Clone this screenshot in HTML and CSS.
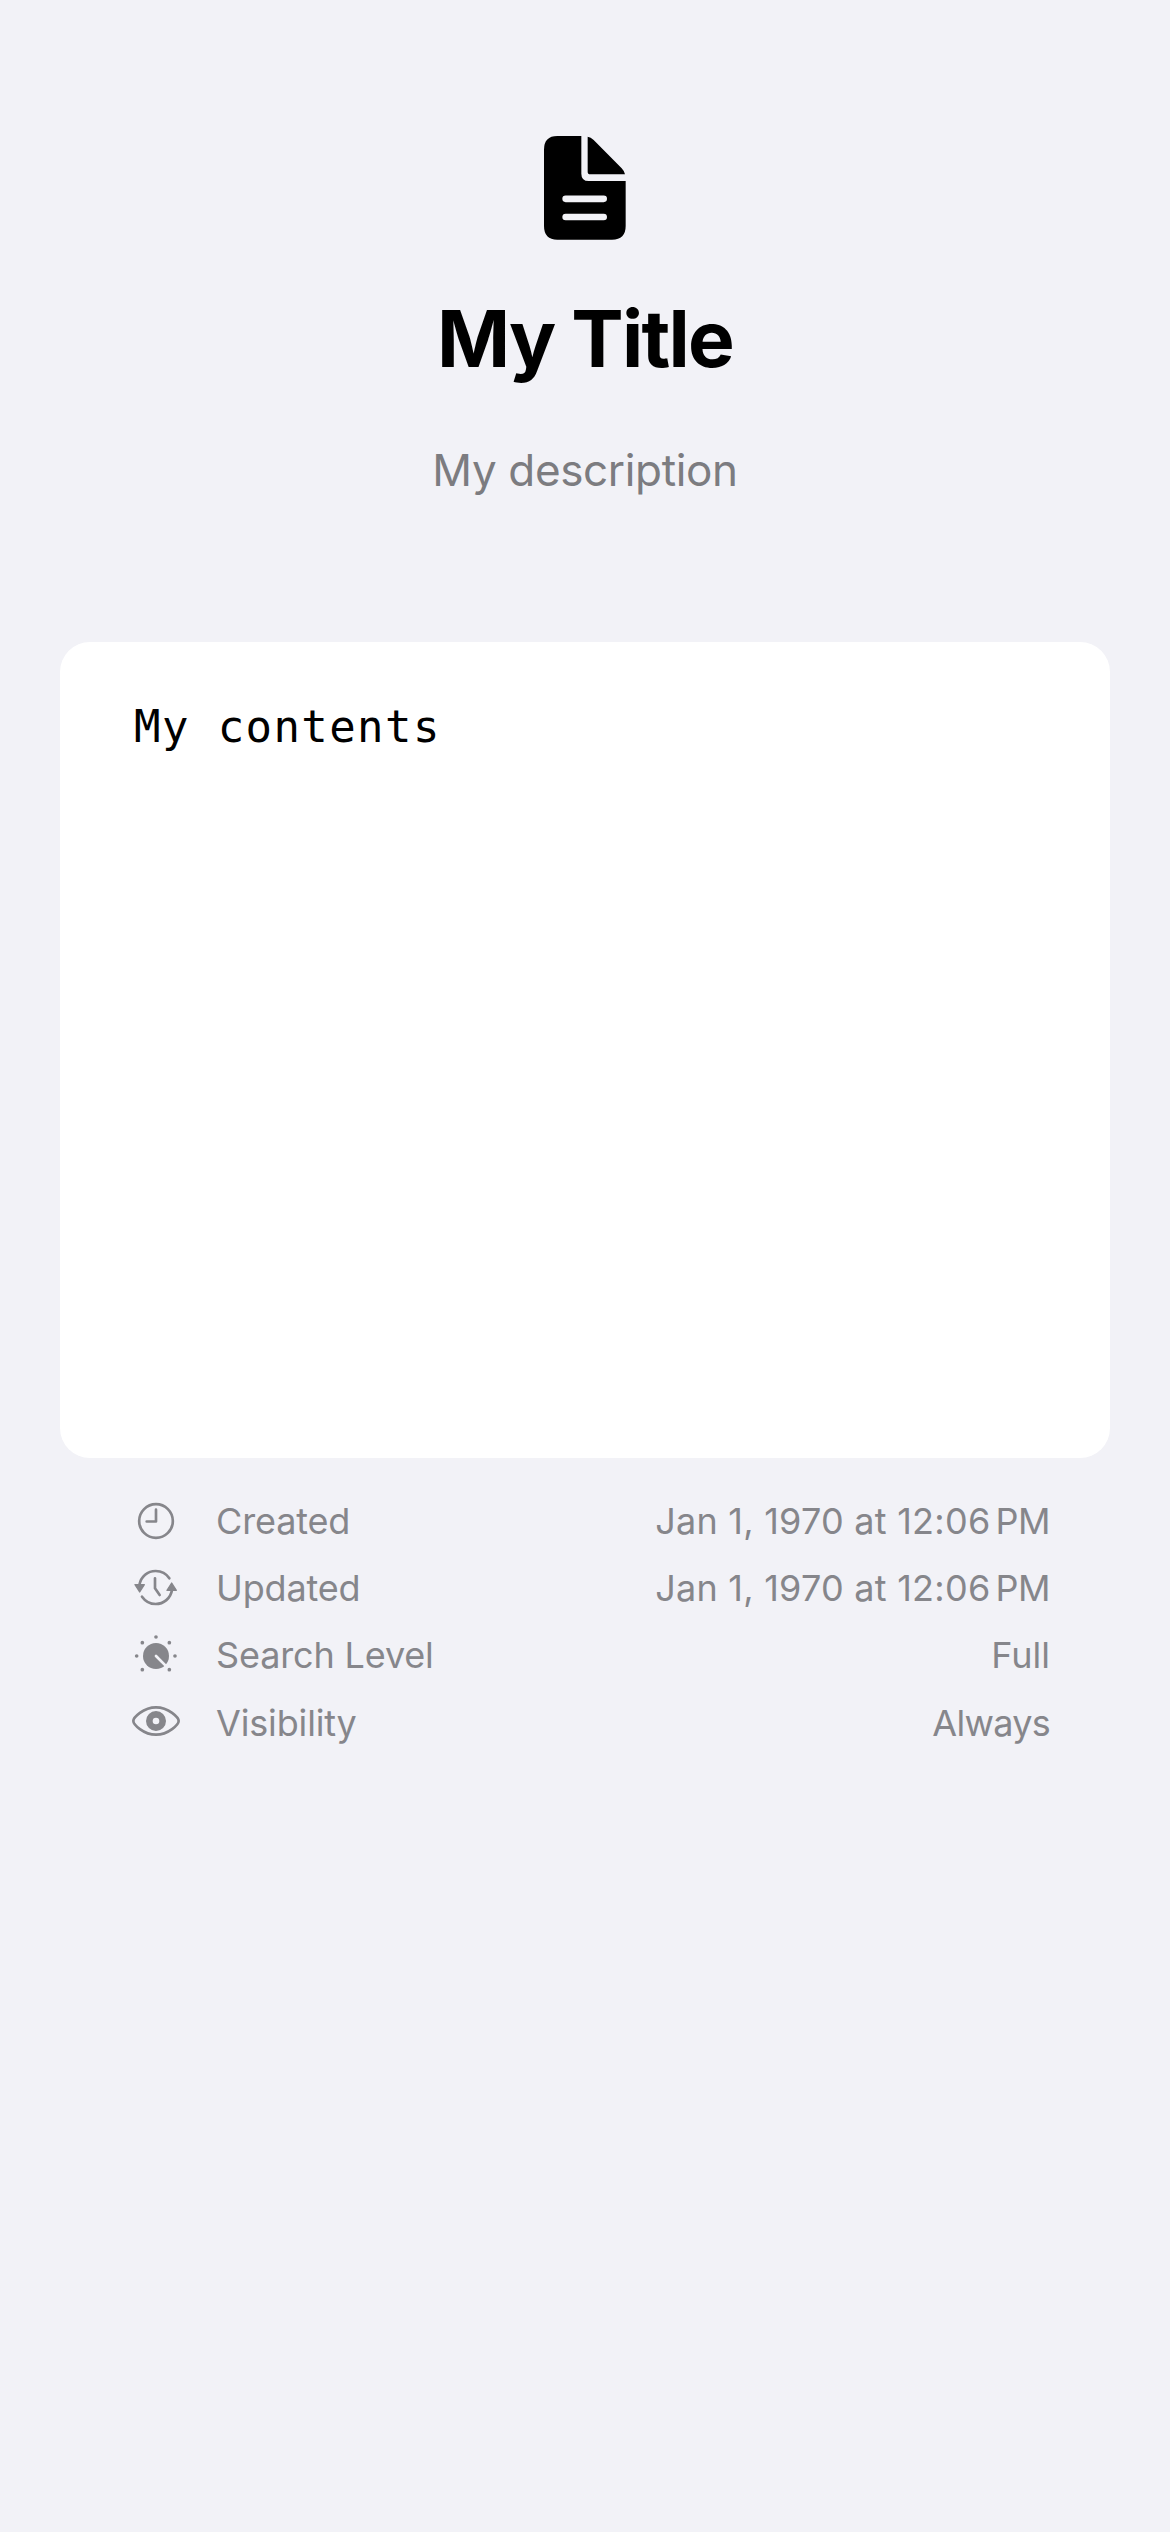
FILE: index.html
```html
<!DOCTYPE html>
<html lang="en">
<head>
<meta charset="utf-8">
<title>My Title</title>
<link rel="stylesheet" href="styles.css">
</head>
<body>
<main class="page">
  <header class="header">
    <svg class="doc-icon" viewBox="372 47 246 312" aria-hidden="true">
      <path d="M412 47H484V160Q484 182 506 182H617V317Q617 358 576 358H412Q372 358 372 317V88Q372 47 412 47Z"/>
      <path d="M503 49Q512 50 521 59L605 144Q613 152 615 162H511Q503 162 503 154Z"/>
      <path class="doc-lines" d="M437 235.500H551M437 290H551"/>
    </svg>
    <h1 class="title">My Title</h1>
    <p class="description">My description</p>
  </header>
  <section class="card"><p class="contents">My contents</p></section>
  <ul class="details">
    <li class="row">
      <svg class="icon" viewBox="18 3 180 180" aria-hidden="true"><circle cx="108" cy="93" r="50.500"/><path d="M108 59V94.500H80"/></svg>
      <span class="label">Created</span>
      <span class="value date"><span class="day">Jan 1, 1970 at 12:06</span><span class="period">PM</span></span>
    </li>
    <li class="row">
      <svg class="icon" viewBox="18 205 180 180" aria-hidden="true"><path d="M58 286C63 260 83 244 107 244C124 244 139 252 148 266M156 301C152 326 131 343 107 343C90 343 76 335 66 321M105 266V296L119 316"/><path class="solid" d="M45 285H73L59 307ZM141 302H169L155 280Z"/></svg>
      <span class="label">Updated</span>
      <span class="value date"><span class="day">Jan 1, 1970 at 12:06</span><span class="period">PM</span></span>
    </li>
    <li class="row">
      <svg class="icon" viewBox="18 17 180 180" aria-hidden="true"><circle class="disc" cx="108" cy="110" r="39"/><path class="cut" d="M108 110L139 141"/><g class="disc"><circle cx="108" cy="53" r="5.500"/><circle cx="67" cy="70" r="5.500"/><circle cx="148" cy="70" r="5.500"/><circle cx="50" cy="110" r="5.500"/><circle cx="165" cy="110" r="5.500"/><circle cx="67" cy="151" r="5.500"/><circle cx="148" cy="151" r="5.500"/></g></svg>
      <span class="label">Search Level</span>
      <span class="value">Full</span>
    </li>
    <li class="row">
      <svg class="icon" viewBox="18 219 180 180" aria-hidden="true"><path d="M40 303C40 293 70 262 108 262C146 262 176 293 176 303C176 313 146 344 108 344C70 344 40 313 40 303Z"/><circle class="iris" cx="108" cy="303" r="20"/></svg>
      <span class="label">Visibility</span>
      <span class="value visibility">Always</span>
    </li>
  </ul>
</main>
</body>
</html>
```
FILE: styles.css
```css
* { box-sizing: border-box; }
body {
  margin: 0;
  background: #f2f2f7;
  font-family: Inter, "Liberation Sans", sans-serif;
}
.page {
  display: flex;
  flex-direction: column;
  min-height: 2532px;
  padding: 136px 60px 0;
}
.header {
  display: flex;
  flex-direction: column;
  align-items: center;
  height: 506px;
}
.doc-icon { width: 82px; height: 104px; fill: #000; }
.doc-lines { fill: none; stroke: #f2f2f7; stroke-width: 20; stroke-linecap: round; }
.title {
  margin: 49px 0 0;
  font-size: 78.500px;
  line-height: 100px;
  font-weight: 700;
  letter-spacing: -1.800px;
}
.description {
  margin: 51px 0 0;
  font-size: 44px;
  line-height: 60px;
  letter-spacing: -0.350px;
  color: #7c7c80;
}
.card {
  height: 816px;
  padding: 55px 74px;
  border-radius: 30px;
  background: #fff;
}
.contents {
  margin: 0;
  font-family: "DejaVu Sans Mono", monospace;
  font-size: 44px;
  line-height: 60px;
  letter-spacing: 1.400px;
  color: #000;
}
.details {
  margin: 29px 0 0;
  padding: 0 60px 0 66px;
  list-style: none;
  color: #86868b;
  font-size: 36px;
}
.row { display: flex; align-items: center; height: 67.330px; }
.icon {
  width: 60px;
  height: 60px;
  margin-right: 30px;
  fill: none;
  stroke: currentColor;
  stroke-width: 8;
  stroke-linecap: round;
  stroke-linejoin: round;
}
.solid { fill: currentColor; stroke-width: 4; }
.disc { fill: currentColor; stroke: none; }
.cut { stroke: #f2f2f7; stroke-width: 8; }
.iris { stroke-width: 20; }
.label { letter-spacing: -0.150px; }
.value { margin-left: auto; }
.visibility { letter-spacing: -0.700px; }
.date { display: flex; gap: 5px; }
.day { letter-spacing: 0.250px; }
.period { letter-spacing: -0.500px; }
```
